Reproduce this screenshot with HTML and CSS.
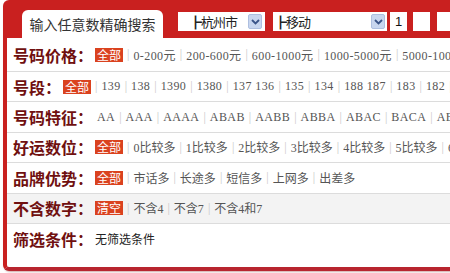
FILE: index.html
```html
<!DOCTYPE html>
<html lang="zh-CN">
<head>
<meta charset="utf-8">
<title>号码筛选</title>
<link rel="stylesheet" href="styles.css">
</head>
<body>
<div class="box">
  <div class="head">
    <div class="tab">输入任意数精确搜索</div>
    <div class="sel sel-city">
      <span class="sel-text">┣杭州市</span>
      <span class="arrow"><svg width="9" height="6" viewBox="0 0 9 6"><path d="M1 1 L4.5 4.5 L8 1" fill="none" stroke="#3a5488" stroke-width="1.8"/></svg></span>
    </div>
    <div class="sel sel-op">
      <span class="sel-text">┣移动</span>
      <span class="arrow"><svg width="9" height="6" viewBox="0 0 9 6"><path d="M1 1 L4.5 4.5 L8 1" fill="none" stroke="#3a5488" stroke-width="1.8"/></svg></span>
    </div>
    <div class="inp">1</div>
    <div class="inp"></div>
    <div class="inp inp-wide"></div>
  </div>

  <div class="row row-first latin">
    <span class="label">号码价格：</span>
    <span class="badge">全部</span><span class="sep">|</span>
    <span class="item">0-200元</span><span class="sep">|</span>
    <span class="item">200-600元</span><span class="sep">|</span>
    <span class="item">600-1000元</span><span class="sep">|</span>
    <span class="item">1000-5000元</span><span class="sep">|</span>
    <span class="item">5000-10000元</span><span class="sep">|</span>
    <span class="item">10000元以上</span>
  </div>

  <div class="row latin">
    <span class="label">号段：</span>
    <span class="badge">全部</span><span class="sep">|</span>
    <span class="item">139</span><span class="sep">|</span>
    <span class="item">138</span><span class="sep">|</span>
    <span class="item">1390</span><span class="sep">|</span>
    <span class="item">1380</span><span class="sep">|</span>
    <span class="item">137 136</span><span class="sep">|</span>
    <span class="item">135</span><span class="sep">|</span>
    <span class="item">134</span><span class="sep">|</span>
    <span class="item">188 187</span><span class="sep">|</span>
    <span class="item">183</span><span class="sep">|</span>
    <span class="item">182</span><span class="sep">|</span>
    <span class="item">159</span><span class="sep">|</span>
    <span class="item">158</span>
  </div>

  <div class="row latin">
    <span class="label">号码特征：</span>
    <span class="item">AA</span><span class="sep">|</span>
    <span class="item">AAA</span><span class="sep">|</span>
    <span class="item">AAAA</span><span class="sep">|</span>
    <span class="item">ABAB</span><span class="sep">|</span>
    <span class="item">AABB</span><span class="sep">|</span>
    <span class="item">ABBA</span><span class="sep">|</span>
    <span class="item">ABAC</span><span class="sep">|</span>
    <span class="item">BACA</span><span class="sep">|</span>
    <span class="item">ABCD</span>
  </div>

  <div class="row">
    <span class="label">好运数位：</span>
    <span class="badge">全部</span><span class="sep">|</span>
    <span class="item">0比较多</span><span class="sep">|</span>
    <span class="item">1比较多</span><span class="sep">|</span>
    <span class="item">2比较多</span><span class="sep">|</span>
    <span class="item">3比较多</span><span class="sep">|</span>
    <span class="item">4比较多</span><span class="sep">|</span>
    <span class="item">5比较多</span><span class="sep">|</span>
    <span class="item">6比较多</span>
  </div>

  <div class="row">
    <span class="label">品牌优势：</span>
    <span class="badge">全部</span><span class="sep">|</span>
    <span class="item">市话多</span><span class="sep">|</span>
    <span class="item">长途多</span><span class="sep">|</span>
    <span class="item">短信多</span><span class="sep">|</span>
    <span class="item">上网多</span><span class="sep">|</span>
    <span class="item">出差多</span>
  </div>

  <div class="row row-gray">
    <span class="label">不含数字：</span>
    <span class="badge">清空</span><span class="sep">|</span>
    <span class="item">不含4</span><span class="sep">|</span>
    <span class="item">不含7</span><span class="sep">|</span>
    <span class="item">不含4和7</span>
  </div>

  <div class="row row-last">
    <span class="label">筛选条件：</span>
    <span class="cond">无筛选条件</span>
  </div>
</div>
</body>
</html>
```

FILE: styles.css
```css
html, body {
  margin: 0;
  padding: 0;
  background: #fff;
  overflow: hidden;
}

body {
  width: 450px;
  height: 273px;
  font-family: "Liberation Serif", "Noto Sans CJK SC", serif;
}

.box {
  margin-left: 3px;
  width: 700px;
  height: 263px;
  border: 4px solid #c9201f;
  border-bottom-color: #b8252f;
  border-radius: 6px;
  box-shadow: 1px 1px 2px rgba(120, 0, 0, 0.35);
  background: #fff;
}

.head {
  display: flex;
  align-items: flex-start;
  height: 34px;
  background: #c9201f;
}

.tab {
  margin: 6px 0 0 15px;
  width: 141px;
  height: 28px;
  box-sizing: border-box;
  background: #fff;
  border-radius: 6px 6px 0 0;
  font: 14px/28px "Noto Sans CJK SC", sans-serif;
  color: #333;
  text-align: center;
}

.sel {
  display: flex;
  align-items: center;
  justify-content: space-between;
  margin-top: 8px;
  height: 19px;
  background: #fff;
  box-sizing: border-box;
}

.sel-city {
  margin-left: 15px;
  width: 87px;
  padding: 0 3px 0 11px;
}

.sel-op {
  margin-left: 8px;
  width: 114px;
  padding: 0 2px 0 1px;
}

.sel-text {
  font: 13px/19px "Noto Sans CJK SC", sans-serif;
  color: #222;
  letter-spacing: -1px;
}

.arrow {
  display: flex;
  align-items: center;
  justify-content: center;
  width: 14px;
  height: 15px;
  box-sizing: border-box;
  background: #c8d6ef;
  border: 1px solid #aebfe0;
  border-radius: 2px;
}

.inp {
  margin-top: 8px;
  margin-left: 3px;
  width: 17px;
  height: 19px;
  background: #fff;
  font: 13px/19px "Liberation Sans", sans-serif;
  color: #111;
  text-align: center;
}

.inp + .inp {
  margin-left: 6px;
}

.inp-wide {
  width: 60px;
}

.inp + .inp.inp-wide {
  margin-left: 7px;
}

.row {
  display: flex;
  align-items: center;
  height: 29.4px;
  padding-left: 6px;
  border-bottom: 1px solid #dcdcdc;
  white-space: nowrap;
  overflow: hidden;
}

.row-first {
  height: 33px;
}

.row-gray {
  background: #f3f3f3;
}

.row-last {
  height: 30px;
  border-bottom: none;
}

.label {
  font: bold 16px/20px "Noto Sans CJK SC", sans-serif;
  color: #701010;
}

.badge {
  margin-left: 2px;
  padding: 0 2px;
  height: 14px;
  background: #da421f;
  color: #fff;
  font: 12px/14px "Noto Sans CJK SC", sans-serif;
}

.sep {
  margin: 0 4px;
  color: #c8c8c8;
  font-size: 12px;
}

.label + .item {
  margin-left: 4px;
}

.item {
  font-size: 12px;
  color: #555;
}

.latin .item {
  letter-spacing: 0.4px;
}

.cond {
  margin-left: 2px;
  font: 12px "Noto Sans CJK SC", sans-serif;
  color: #222;
}
```
